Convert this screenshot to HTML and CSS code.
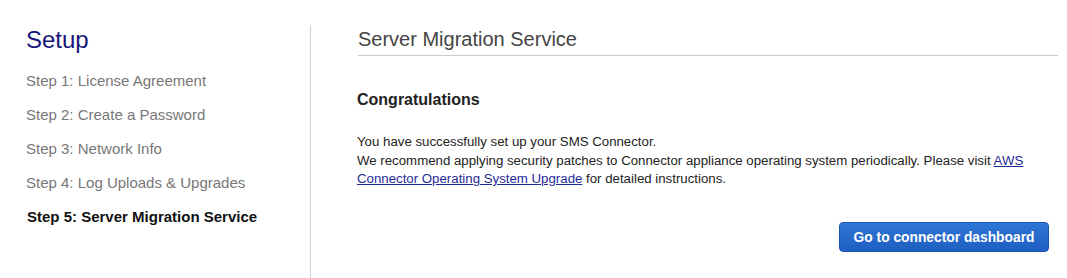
FILE: index.html
```html
<!DOCTYPE html>
<html>
<head>
<meta charset="utf-8">
<link rel="stylesheet" href="styles.css">
</head>
<body>
<div class="page">
  <aside class="sidebar">
    <h1 class="setup-title">Setup</h1>
    <ul class="steps">
      <li class="step">Step 1: License Agreement</li>
      <li class="step">Step 2: Create a Password</li>
      <li class="step">Step 3: Network Info</li>
      <li class="step">Step 4: Log Uploads &amp; Upgrades</li>
      <li class="step step-active">Step 5: Server Migration Service</li>
    </ul>
  </aside>
  <main class="main">
    <h2 class="main-title">Server Migration Service</h2>
    <h3 class="congrats">Congratulations</h3>
    <p class="message">You have successfully set up your SMS Connector.<br>We recommend applying security patches to Connector appliance operating system periodically. Please visit <a class="link" href="#">AWS Connector Operating System Upgrade</a> for detailed instructions.</p>
    <div class="actions">
      <button class="btn-primary" type="button">Go to connector dashboard</button>
    </div>
  </main>
</div>
</body>
</html>
```

FILE: styles.css
```css
html, body {
  margin: 0;
  padding: 0;
  background: #ffffff;
  font-family: "Liberation Sans", Arial, sans-serif;
}

.page {
  display: flex;
  padding-top: 25px;
  height: 253px;
}

.sidebar {
  width: 284px;
  padding-left: 26px;
  border-right: 1px solid #d0d0d0;
  flex-shrink: 0;
}

.setup-title {
  margin: 0;
  padding-top: 1px;
  font-size: 24px;
  line-height: 28px;
  font-weight: normal;
  color: #16157a;
}

.steps {
  list-style: none;
  margin: 0;
  padding: 0;
  padding-top: 10px;
}

.step {
  font-size: 15px;
  line-height: 34px;
  color: #777777;
}

.step-active {
  font-weight: bold;
  color: #111111;
  padding-left: 1px;
}

.main {
  flex: 1;
  padding-left: 47px;
  padding-right: 9px;
}

.main-title {
  margin: 0;
  font-size: 20px;
  line-height: 28px;
  font-weight: normal;
  color: #444444;
  padding-bottom: 2px;
  border-bottom: 1px solid #cccccc;
}

.congrats {
  margin: 0;
  padding-top: 34px;
  font-size: 16px;
  line-height: 20px;
  font-weight: bold;
  color: #222222;
  margin-left: -1px;
}

.message {
  margin: 0;
  padding-top: 23px;
  font-size: 13.25px;
  line-height: 18.7px;
  color: #222222;
  margin-left: -1px;
}

.link {
  color: #1f2a98;
  text-decoration: underline;
}

.actions {
  display: flex;
  justify-content: flex-end;
  padding-top: 33px;
  padding-right: 9px;
}

.btn-primary {
  width: 210px;
  height: 30px;
  border: 1px solid #1b56b4;
  border-radius: 4px;
  background: linear-gradient(#2f76d4, #1e5ec2);
  color: #ffffff;
  font-family: "Liberation Sans", Arial, sans-serif;
  font-size: 13.8px;
  font-weight: bold;
  padding: 0;
}
```
